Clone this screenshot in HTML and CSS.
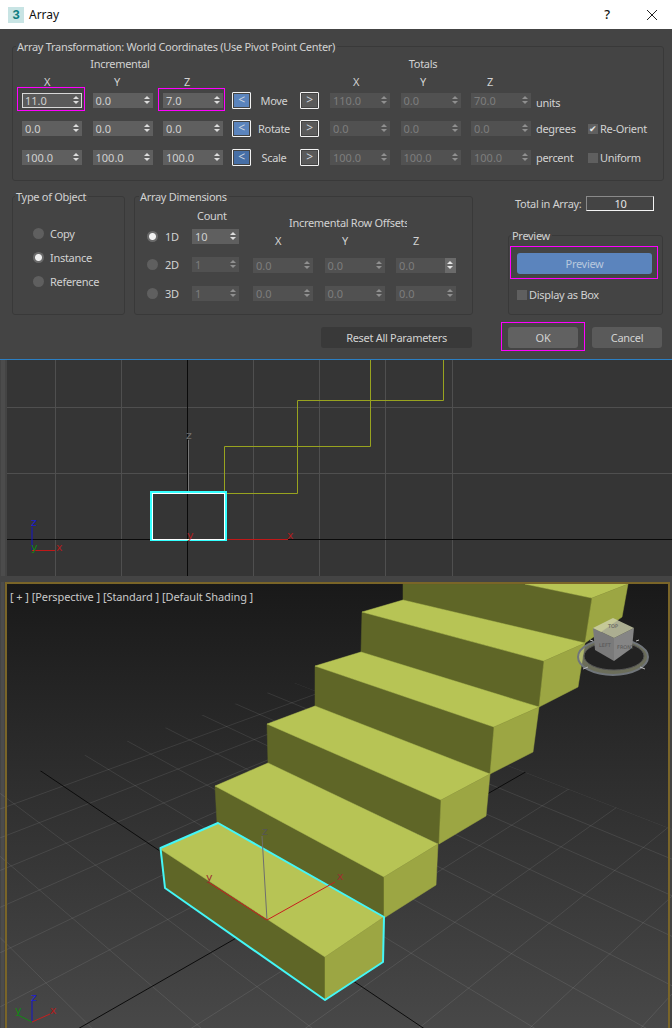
FILE: index.html
```html
<!DOCTYPE html>
<html lang="en">
<head>
<meta charset="utf-8">
<title>Array</title>
<link rel="stylesheet" href="styles.css">
</head>
<body>
<header class="titlebar">
  <span class="app-icon">3</span>
  <span class="title">Array</span>
  <span class="help">?</span>
  <svg class="close" width="12" height="12" viewBox="0 0 12 12"><path d="M1 1L11 11M11 1L1 11"/></svg>
</header>

<main class="dialog">
  <fieldset class="group transform">
    <legend>Array Transformation: World Coordinates (Use Pivot Point Center)</legend>
    <div class="heads">
      <span class="head-inc">Incremental</span>
      <span class="head-tot">Totals</span>
    </div>
    <div class="axes">
      <div class="axes-left"><span>X</span><span>Y</span><span>Z</span></div>
      <div class="axes-right"><span>X</span><span>Y</span><span>Z</span></div>
    </div>
    <div class="rows">
      <div class="row">
        <div class="spins">
          <div class="spin focus"><span>11.0</span><i></i></div>
          <div class="spin"><span>0.0</span><i></i></div>
          <div class="spin"><span>7.0</span><i></i></div>
        </div>
        <div class="mid">
          <span class="arrow on">&lt;</span><span class="mid-label">Move</span><span class="arrow">&gt;</span>
        </div>
        <div class="spins">
          <div class="spin off"><span>110.0</span><i></i></div>
          <div class="spin off"><span>0.0</span><i></i></div>
          <div class="spin off"><span>70.0</span><i></i></div>
        </div>
        <span class="unit low">units</span>
      </div>
      <div class="row">
        <div class="spins">
          <div class="spin"><span>0.0</span><i></i></div>
          <div class="spin"><span>0.0</span><i></i></div>
          <div class="spin"><span>0.0</span><i></i></div>
        </div>
        <div class="mid">
          <span class="arrow on">&lt;</span><span class="mid-label">Rotate</span><span class="arrow">&gt;</span>
        </div>
        <div class="spins">
          <div class="spin off"><span>0.0</span><i></i></div>
          <div class="spin off"><span>0.0</span><i></i></div>
          <div class="spin off"><span>0.0</span><i></i></div>
        </div>
        <span class="unit">degrees</span>
        <span class="check-line"><span class="check">✔</span>Re-Orient</span>
      </div>
      <div class="row row-last">
        <div class="spins">
          <div class="spin"><span>100.0</span><i></i></div>
          <div class="spin"><span>100.0</span><i></i></div>
          <div class="spin"><span>100.0</span><i></i></div>
        </div>
        <div class="mid">
          <span class="arrow on deep">&lt;</span><span class="mid-label">Scale</span><span class="arrow">&gt;</span>
        </div>
        <div class="spins">
          <div class="spin off"><span>100.0</span><i></i></div>
          <div class="spin off"><span>100.0</span><i></i></div>
          <div class="spin off"><span>100.0</span><i></i></div>
        </div>
        <span class="unit">percent</span>
        <span class="check-line"><span class="check"></span>Uniform</span>
      </div>
    </div>
  </fieldset>

  <div class="lower">
    <fieldset class="group type">
      <legend>Type of Object</legend>
      <div class="radios">
        <label class="radio-line"><span class="radio"></span>Copy</label>
        <label class="radio-line"><span class="radio sel"></span>Instance</label>
        <label class="radio-line"><span class="radio"></span>Reference</label>
      </div>
    </fieldset>

    <fieldset class="group dims">
      <legend>Array Dimensions</legend>
      <div class="dims-body">
        <div class="dims-left">
          <div class="count-head">Count</div>
          <div class="dim-row"><span class="radio sel"></span><span class="dim-name">1D</span><div class="spin small"><span>10</span><i></i></div></div>
          <div class="dim-row"><span class="radio"></span><span class="dim-name">2D</span><div class="spin small off"><span>1</span><i></i></div></div>
          <div class="dim-row dim-last"><span class="radio"></span><span class="dim-name">3D</span><div class="spin small off"><span>1</span><i></i></div></div>
        </div>
        <div class="dims-right">
          <div class="offset-head">Incremental Row Offsets</div>
          <div class="offset-axes"><span>X</span><span>Y</span><span>Z</span></div>
          <div class="spins offset-row">
            <div class="spin off"><span>0.0</span><i></i></div>
            <div class="spin off"><span>0.0</span><i></i></div>
            <div class="spin off hover"><span>0.0</span><i></i></div>
          </div>
          <div class="spins offset-row offset-last">
            <div class="spin off"><span>0.0</span><i></i></div>
            <div class="spin off"><span>0.0</span><i></i></div>
            <div class="spin off"><span>0.0</span><i></i></div>
          </div>
        </div>
      </div>
    </fieldset>

    <div class="side">
      <div class="total"><span>Total in Array:</span><span class="total-box">10</span></div>
      <fieldset class="group preview">
        <legend>Preview</legend>
        <div class="preview-btn">Preview</div>
        <div class="check-line box-line"><span class="check"></span>Display as Box</div>
      </fieldset>
    </div>
  </div>

  <div class="actions">
    <span class="btn reset">Reset All Parameters</span>
    <span class="btn ok">OK</span>
    <span class="btn cancel">Cancel</span>
  </div>

  <span class="mark mark-x"></span>
  <span class="mark mark-z"></span>
  <span class="mark mark-preview"></span>
  <span class="mark mark-ok"></span>
</main>

<svg class="view-top" viewBox="0 360 672 216" width="672" height="216">
  <rect class="vp-bg" x="7" y="360" width="665" height="216"/>
  <rect class="strip" x="1" y="360" width="4" height="216"/>
  <path class="t-grid" d="M55.5 360V576M121.5 360V576M253.5 360V576M319.5 360V576M385.5 360V576M452.5 360V576M7 407.5H672M7 473.5H672"/>
  <path class="t-axis" d="M187.5 360V576M7 539.5H672"/>
  <path class="t-zaxis" d="M188.5 440V492"/>
  <path class="t-step" d="M224.5 493V446.5H370.5V360M224.5 493.5H297.5V400.5H443.5V360"/>
  <rect class="t-sel" x="151" y="492" width="75" height="48"/>
  <rect class="t-sel-in" x="152.5" y="493.5" width="72" height="46"/>
  <path class="t-red" d="M227 539.5H288M32 550.5H55"/>
  <path class="t-blue" d="M32 527V550"/>
  <text class="lab gray" x="186" y="439">z</text>
  <text class="lab red" x="187" y="539">y</text>
  <text class="lab red" x="287" y="539">x</text>
  <text class="lab blue" x="31" y="526">z</text>
  <text class="lab red" x="56" y="551">x</text>
  <text class="lab green" x="31" y="551">y</text>
</svg>
<div class="view-gap"></div>

<section class="view-bottom">
  <div class="vp-label"><span>[ + ]</span><span>[Perspective ]</span><span>[Standard ]</span><span>[Default Shading ]</span></div>
  <svg viewBox="0 582 672 446" width="672" height="446">
    <defs>
      <linearGradient id="persp" x1="0" y1="0" x2="0" y2="1">
        <stop offset="0" stop-color="#191919"/>
        <stop offset="1" stop-color="#484848"/>
      </linearGradient>
      <clipPath id="floor"><path d="M295 683L700 840V1100H-120V826Z"/></clipPath>
    </defs>
    <rect class="strip" x="1" y="582" width="3" height="446"/>
    <rect x="6" y="583" width="663" height="445" fill="url(#persp)"/>
    <g clip-path="url(#floor)">
      <path class="p-grid" d="M1261 350L-100 816.6M1261 350L-100 845.4M1261 350L-100 876.6M1261 350L-100 911.8M1261 350L-100 951.6M1261 350L-100 1000.6M1261 350L-100 1059M1261 350L-100 1213M1261 350L-100 1316M1261 350L-100 1446M1261 350L-100 1612M1261 350L-100 1838"/>
      <path class="p-grid" d="M-617 329L700 840M-617 329L700 870.7M-617 329L700 908M-617 329L700 949.6M-617 329L700 1000M-617 329L700 1058M-617 329L700 1128.6M-617 329L700 1320M-617 329L700 1454.5M-617 329L700 1628"/>
      <path class="p-axis" d="M1261 350L-100 1131M-617 329L700 1214"/>
    </g>
    <polygon class="dark" points="403,584 525,584 592,598 585,643 403,600"/>
    <polygon class="top" points="525,584 628,584 592,598"/>
    <polygon class="side" points="592,598 628,584 622,617 585,643"/>
    <polygon class="dark" points="362,612 544,661 539,707 361,652"/>
    <polygon class="top" points="362,612 403,600 585,643 544,661"/>
    <polygon class="side" points="544,661 585,643 578,687 539,707"/>
    <polygon class="dark" points="315,666 494,727 490,774 315,706"/>
    <polygon class="top" points="315,666 361,652 539,707 494,727"/>
    <polygon class="side" points="494,727 539,707 533,752 490,774"/>
    <polygon class="dark" points="267,724 441,800 439,844 268,763"/>
    <polygon class="top" points="267,724 315,706 490,774 441,800"/>
    <polygon class="side" points="441,800 490,774 486,816 439,844"/>
    <polygon class="dark" points="215,786 384,877 384,918 217,823"/>
    <polygon class="top" points="215,786 268,763 438,844 384,877"/>
    <polygon class="side" points="384,877 438,844 436,885 384,918"/>
    <polygon class="dark" points="160,849 325,957 325,1000 165,888"/>
    <polygon class="top" points="160,849 218,823 384,917 325,957"/>
    <polygon class="side" points="325,957 384,917 383,962 325,1000"/>
    <polygon class="outline" points="160.5,848 218,823 384,917 383,962 325,1000 165,888"/>
    <path class="g-gray" d="M267 920L262 836"/>
    <path class="g-red" d="M267 920L208 882M267 920L335 882"/>
    <text class="lab darkgray" x="262" y="835">z</text>
    <text class="lab darkred" x="206" y="881">y</text>
    <text class="lab darkred" x="337" y="880">x</text>
    <path class="g-blue" d="M32 1022V1001"/>
    <path class="g-red" d="M32 1022L50 1014"/>
    <path class="g-green" d="M32 1022L18 1015"/>
    <text class="lab blue" x="31" y="1001">z</text>
    <text class="lab red" x="50" y="1014">x</text>
    <text class="lab green" x="15" y="1014">y</text>

    <ellipse class="ring" cx="613" cy="657" rx="35" ry="18"/>
    <ellipse class="ring-in" cx="614" cy="656" rx="30" ry="14"/>
    <polygon class="cube-l" points="593,628 614,638 614,661 595,650"/>
    <polygon class="cube-r" points="634,628 614,638 614,661 632,648"/>
    <polygon class="cube-t" points="593,628 613,618 634,628 614,638"/>
    <text class="cube-txt" x="599" y="647">LEFT</text>
    <text class="cube-txt" x="617" y="649">FRONT</text>
    <text class="cube-txt" x="608" y="628">TOP</text>
    <path class="ring-tick" d="M583 669l5-2M640 667l5 2M590 640l3 1M636 641l3-1"/>

    <rect class="ochre" x="5" y="582" width="665" height="2"/>
    <rect class="ochre" x="5" y="582" width="2" height="446"/>
    <rect class="ochre" x="668" y="582" width="2" height="446"/>
  </svg>
</section>
</body>
</html>
```
FILE: styles.css
```css
* { box-sizing: border-box; }
html, body { margin: 0; padding: 0; }
body {
  width: 672px;
  height: 1028px;
  overflow: hidden;
  background: #444;
  color: #d2d2d2;
  font: 11px/15px "Noto Sans", "Open Sans", sans-serif;
  letter-spacing: -.3px;
}

/* title bar */
.titlebar {
  height: 29px;
  background: #fff;
  color: #111;
  display: flex;
  align-items: center;
  font-size: 12px;
  letter-spacing: 0;
}
.app-icon {
  width: 16px;
  height: 16px;
  margin-left: 8px;
  background: #c8e4e4;
  color: #0e7d82;
  font: bold 13px/16px "Liberation Sans", sans-serif;
  text-align: center;
}
.title { margin-left: 5px; }
.help { margin-left: auto; font-size: 13px; font-weight: 500; }
.close { margin: 0 14px 0 36px; }
.close path { stroke: #222; stroke-width: 1; fill: none; }

/* dialog */
.dialog {
  position: relative;
  height: 331px;
  padding-top: 10px;
  background: #444;
  border-bottom: 1px solid #2b7fc3;
}
.group {
  margin: 0;
  padding: 0;
  min-width: 0;
  border: 1px solid #393939;
  border-radius: 3px;
}
.group legend {
  padding: 0 2px 0 1px;
  line-height: 15px;
  white-space: nowrap;
}
.transform { width: 652px; height: 142px; margin-left: 12px; padding-left: 9px; }
.transform legend { margin-left: -6px; }

.heads { display: flex; margin-top: 2px; height: 15px; }
.head-inc { width: 196px; text-align: center; }
.head-tot { width: 186px; margin-left: 112px; text-align: center; }

.axes { display: flex; height: 15px; margin-top: 3px; }
.axes-left { display: flex; width: 308px; gap: 20px; }
.axes-left span { width: 50px; text-align: center; }
.axes-right { display: flex; gap: 15px; }
.axes-right span { width: 52px; text-align: center; }

.rows { display: flex; flex-direction: column; gap: 13px; margin-top: 4px; }
.row { display: flex; align-items: center; height: 15px; }
.row-last { margin-top: 1px; }

.spins { display: flex; gap: 10.5px; }
.spin {
  position: relative;
  flex: none;
  width: 60px;
  height: 15px;
  padding-left: 3px;
  background: #5f5f5f;
  color: #cfcfcf;
  line-height: 15px;
  letter-spacing: 0;
}
.spin i {
  position: absolute;
  right: 0;
  top: 0;
  width: 11px;
  height: 15px;
}
.spin i::before, .spin i::after {
  content: "";
  position: absolute;
  left: 2px;
  border-left: 3px solid transparent;
  border-right: 3px solid transparent;
}
.spin i::before { top: 3px; border-bottom: 3px solid #dcdcdc; }
.spin i::after { top: 8px; border-top: 3px solid #dcdcdc; }
.spin.off { background: #515151; color: #7d7d7d; }
.spin.off i::before { border-bottom-color: #909090; }
.spin.off i::after { border-top-color: #909090; }
.spin.focus { outline: 1px solid #d8d8d8; outline-offset: -1px; background: #5a5a5a; }
.spin.small { width: 47px; }
.spin.hover i { background: #6a6a6a; }
.spin.hover i::before { border-bottom-color: #e4e4e4; }
.spin.hover i::after { border-top-color: #e4e4e4; }

.mid {
  display: flex;
  align-items: center;
  width: 87px;
  margin: 0 11px 0 9px;
}
.mid-label { flex: 1; padding-right: 3px; text-align: center; }
.arrow {
  width: 19px;
  height: 17px;
  border: 1px solid #f2f2f2;
  border-radius: 1px;
  background: #5a5a5a;
  box-shadow: inset 0 0 0 1px #444;
  color: #cfd6df;
  font-size: 12px;
  line-height: 14px;
  text-align: center;
}
.arrow.on { background: #5b84bd; }
.arrow.deep { background: #476fa6; }

.unit { width: 52px; margin-left: 5px; }
.unit.low { padding-top: 4px; }
.check-line { display: flex; align-items: center; gap: 2px; }
.check {
  width: 10px;
  height: 10px;
  background: #5f5f5f;
  color: #e6e6e6;
  font-size: 9px;
  line-height: 10px;
  text-align: center;
}

/* lower groups */
.lower { display: flex; margin: 8px 0 0 12px; height: 126px; }
.type { width: 113px; }
.type legend { margin-left: 2px; }
.radios { display: flex; flex-direction: column; gap: 9px; padding: 22px 0 0 20px; }
.radio-line { display: flex; align-items: center; gap: 6px; height: 15px; }
.radio {
  flex: none;
  width: 11px;
  height: 11px;
  border-radius: 50%;
  background: #5f5f5f;
}
.radio.sel { background: radial-gradient(circle, #f0f0f0 0 3px, #6a6a6a 4px); }

.dims { width: 339px; margin-left: 9px; }
.dims legend { margin-left: 4px; }
.dims-body { display: flex; padding-left: 12px; }
.dims-left { width: 106px; }
.count-head { padding: 4px 0 0 50px; height: 19px; margin-bottom: 6px; }
.dim-row { display: flex; align-items: center; height: 15px; margin-bottom: 13px; }
.dim-row.dim-last { margin: 14px 0 0; }
.dim-name { width: 34px; padding-left: 7px; }
.dims-right { width: 203px; }
.offset-head { margin: 11px 0 0 36px; width: 118px; overflow: hidden; white-space: nowrap; height: 15px; }
.offset-axes { display: flex; height: 15px; margin-top: 3px; padding-left: 22px; }
.offset-axes span { flex: none; width: 67px; }
.offset-axes span + span { width: 71px; }
.offset-row { gap: 11.5px; margin-top: 10px; }
.offset-row.offset-last { margin-top: 13px; }

.side { display: flex; flex-direction: column; width: 155px; margin-left: 35px; padding-top: 7px; }
.total { display: flex; gap: 5px; padding-left: 7px; }
.total-box {
  width: 68px;
  height: 15px;
  border: 1px solid #f4f4f4;
  border-top-color: #8a8a8a;
  border-left-color: #8a8a8a;
  color: #e4e4e4;
  line-height: 14px;
  text-align: center;
}
.preview { flex: 1; margin-top: 17px; padding: 10px 0 0 8px; }
.preview legend { margin-left: -6px; }
.preview-btn {
  width: 135px;
  height: 21px;
  border-radius: 3px;
  background: #5b84bd;
  color: #b8c8dd;
  line-height: 21px;
  text-align: center;
}
.box-line { margin-top: 13px; }

/* actions */
.actions { display: flex; margin: 12px 0 0 321px; height: 21px; }
.btn {
  height: 21px;
  border-radius: 3px;
  line-height: 21px;
  text-align: center;
  width: 70px;
}
.reset { width: 151px; background: #393939; }
.ok { margin-left: 36px; background: #616161; }
.cancel { margin-left: 14px; background: #5a5a5a; }

/* annotation frames */
.mark { position: absolute; border: 1px solid #f0f; }
.mark-x { left: 17px; top: 58px; width: 68px; height: 24px; }
.mark-z { left: 158px; top: 59px; width: 67px; height: 23px; }
.mark-preview { left: 510px; top: 217px; width: 148px; height: 33px; }
.mark-ok { left: 501px; top: 293px; width: 84px; height: 29px; }

/* viewports */
.view-top, .view-bottom svg { display: block; }
.view-gap { height: 6px; background: #444; }
.view-bottom { position: relative; height: 446px; }
.vp-label {
  position: absolute;
  left: 10px;
  top: 7px;
  display: flex;
  gap: 3px;
  color: #c9c9c9;
  letter-spacing: -.1px;
}
.vp-bg { fill: #353535; }
.strip { fill: #4c4c4c; }
.t-grid { stroke: #4f4f4f; fill: none; }
.t-axis { stroke: #0a0a0a; fill: none; }
.t-zaxis { stroke: #777; fill: none; }
.t-step { stroke: #98a31f; fill: none; }
.t-sel { stroke: #3ff; stroke-width: 2; fill: none; }
.t-sel-in { stroke: #fff; fill: none; }
.t-red { stroke: #c01818; fill: none; }
.t-blue { stroke: #1414c8; fill: none; }
.lab { font: 11px "DejaVu Sans", sans-serif; letter-spacing: 0; }
.gray { fill: #707070; }
.red { fill: #b01c1c; }
.blue { fill: #1c1cd0; }
.green { fill: #128a12; }
.darkgray { fill: #555; }
.darkred { fill: #9c3030; }

.p-grid { stroke: #fff; stroke-opacity: .09; fill: none; }
.p-axis { stroke: #0c0c0c; fill: none; }
.dark { fill: #5f6627; stroke: #5f6627; stroke-width: .5; }
.top { fill: #b7c455; stroke: #b7c455; stroke-width: .5; }
polygon.side { fill: #9ca643; stroke: #9ca643; stroke-width: .5; }
.outline { fill: none; stroke: #44f6f6; stroke-width: 2; stroke-linejoin: round; }
.g-gray { stroke: #6e6e6e; fill: none; }
.g-red { stroke: #c81e1e; fill: none; }
.g-blue { stroke: #1414c8; fill: none; }
.g-green { stroke: #128a12; fill: none; }
.ring { fill: #c5c9a0; fill-opacity: .45; stroke: #70757a; stroke-width: 2; }
.ring-in { fill: #222; stroke: #555; }
.cube-l { fill: #7a7a7a; }
.cube-r { fill: #858585; }
.cube-t { fill: #cfd2ae; fill-opacity: .8; }
.cube-txt { font: 5px "DejaVu Sans", sans-serif; fill: #555; letter-spacing: 0; }
.ring-tick { stroke: #bbb; fill: none; }
.ochre { fill: #7a6528; }
```
